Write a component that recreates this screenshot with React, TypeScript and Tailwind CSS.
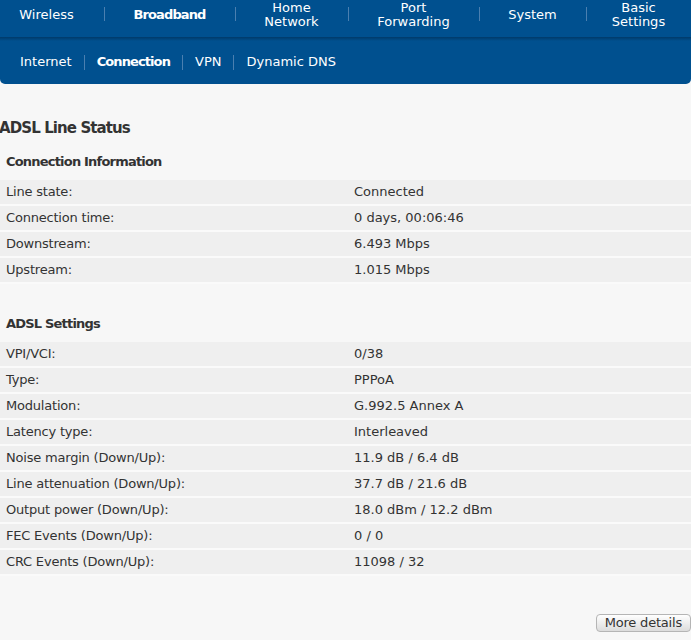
import React from 'react';

const mainNav = [
    { label: 'Wireless', w: 'w-[104px] pr-[11px]' },
    { label: 'Broadband', w: 'w-[131px]', active: true },
    { label: 'Home Network', w: 'w-[113px]' },
    { label: 'Port Forwarding', w: 'w-[131px]' },
    { label: 'System', w: 'w-[107px]' },
    { label: 'Basic Settings', w: 'w-[105px]' },
];

const subNav = ['Internet', 'Connection', 'VPN', 'Dynamic DNS'];

const connectionInfo: [string, string][] = [
    ['Line state:', 'Connected'],
    ['Connection time:', '0 days, 00:06:46'],
    ['Downstream:', '6.493 Mbps'],
    ['Upstream:', '1.015 Mbps'],
];

const adslSettings: [string, string][] = [
    ['VPI/VCI:', '0/38'],
    ['Type:', 'PPPoA'],
    ['Modulation:', 'G.992.5 Annex A'],
    ['Latency type:', 'Interleaved'],
    ['Noise margin (Down/Up):', '11.9 dB / 6.4 dB'],
    ['Line attenuation (Down/Up):', '37.7 dB / 21.6 dB'],
    ['Output power (Down/Up):', '18.0 dBm / 12.2 dBm'],
    ['FEC Events (Down/Up):', '0 / 0'],
    ['CRC Events (Down/Up):', '11098 / 32'],
];

function InfoTable({ rows }: { rows: [string, string][] }) {
    return (
        <div className="flex flex-col">
            {rows.map(([label, value]) => (
                <div key={label} className="flex h-[26px] items-center bg-[#efefef] border-b-2 border-[#fafafa]">
                    <div className="w-[354px] pl-[6px] tracking-[-0.2px]">{label}</div>
                    <div>{value}</div>
                </div>
            ))}
        </div>
    );
}

export default function App() {
    return (
        <div className="w-[691px] h-[640px] bg-[#f7f7f7] text-[13px] text-[#333] font-['DejaVu_Sans',Verdana,sans-serif] overflow-hidden">
            {/* Main navigation */}
            <div className="bg-[#00508f] rounded-b-[5px] overflow-hidden">
                <div className="flex h-[37px] items-start pt-[1px] text-white leading-[14px]">
                    {mainNav.map((item, i) => (
                        <div
                            key={item.label}
                            className={`${item.w} h-[28px] flex items-center justify-center text-center relative ${item.active ? 'font-bold tracking-[-0.9px]' : ''}`}
                        >
                            {i > 0 && <span className="absolute left-0 top-[6px] h-[14px] w-px bg-[#4a7fb0]" />}
                            <span className={item.label.includes(' ') ? 'w-[80px]' : ''}>{item.label}</span>
                        </div>
                    ))}
                </div>
                <div className="h-[4px] bg-gradient-to-b from-[#003a6a] to-[#00508f]" />
                {/* Sub navigation */}
                <div className="flex h-[43px] items-center pl-[20px] pb-[1px] text-white">
                    {subNav.map((item, i) => (
                        <div key={item} className="flex items-center">
                            {i > 0 && <span className="mx-[12px] h-[15px] w-px bg-[#4a7fb0]" />}
                            <span className={item === 'Connection' ? 'font-bold tracking-[-0.9px]' : ''}>{item}</span>
                        </div>
                    ))}
                </div>
            </div>

            <h1 className="mt-[35px] -ml-[1px] text-[15px] font-bold leading-[18px] tracking-[-0.9px]">ADSL Line Status</h1>

            <h2 className="mt-[17px] pl-[6px] font-bold leading-[16px] tracking-[-0.8px]">Connection Information</h2>
            <div className="mt-[10px]">
                <InfoTable rows={connectionInfo} />
            </div>

            <h2 className="mt-[32px] pl-[6px] font-bold leading-[16px] tracking-[-0.8px]">ADSL Settings</h2>
            <div className="mt-[10px]">
                <InfoTable rows={adslSettings} />
            </div>

            <div className="flex justify-end mt-[38px]">
                <button className="h-[18px] px-[8px] rounded-[4px] border border-[#b5b5b5] bg-gradient-to-b from-[#ffffff] to-[#dcdcdc] text-[13px] leading-[14px] text-[#333] tracking-[-0.2px]">
                    More details
                </button>
            </div>
        </div>
    );
}
